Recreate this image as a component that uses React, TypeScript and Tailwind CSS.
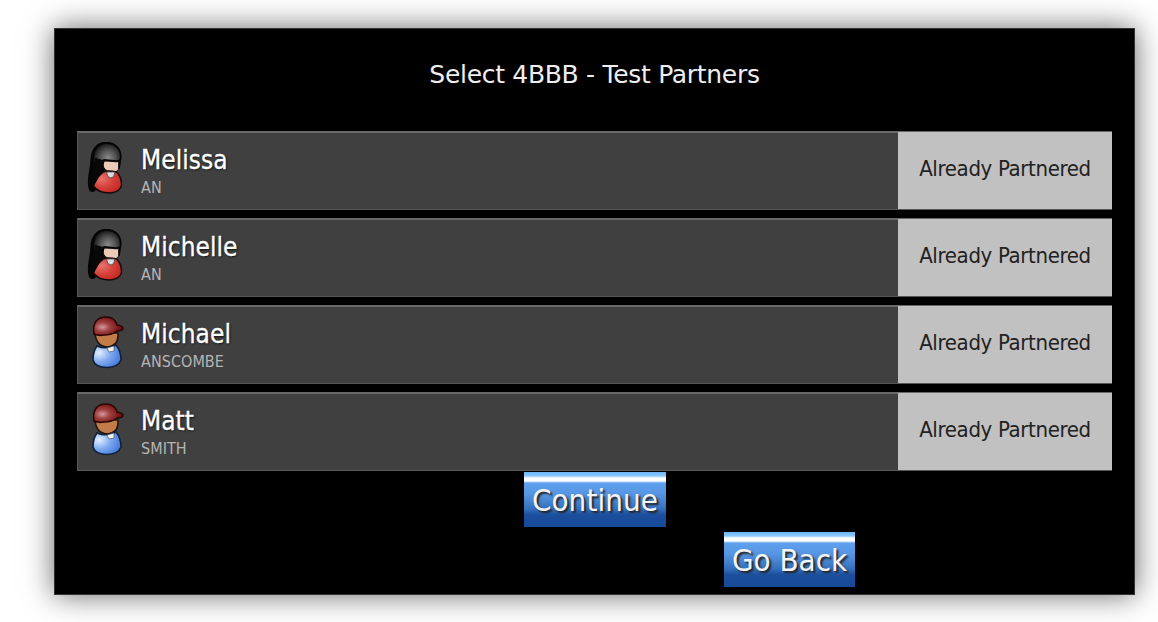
const players = [
    { name: 'Melissa', surname: 'AN', female: true },
    { name: 'Michelle', surname: 'AN', female: true },
    { name: 'Michael', surname: 'ANSCOMBE', female: false },
    { name: 'Matt', surname: 'SMITH', female: false },
]

const FemaleIcon = () => (
    <svg width="37" height="54" viewBox="0.5 0 38 54" preserveAspectRatio="none">
        <defs>
            <radialGradient id="hair" gradientUnits="userSpaceOnUse" cx="22" cy="17" r="17">
                <stop offset="0" stopColor="#8a8a8a" />
                <stop offset="0.45" stopColor="#555" />
                <stop offset="0.85" stopColor="#1c1c1c" />
                <stop offset="1" stopColor="#050505" />
            </radialGradient>
            <radialGradient id="dress" cx="0.3" cy="0.35" r="0.8">
                <stop offset="0" stopColor="#e8746d" />
                <stop offset="0.5" stopColor="#d5403b" />
                <stop offset="1" stopColor="#c3241f" />
            </radialGradient>
        </defs>
        <path d="M20 1C10 1 4.500 8 4 19C3.500 29 0 38 2 47C2.500 51 6 52 9 50L18 30L34 28C38 13 33 1 20 1Z" fill="#060606" />
        <path d="M17 20H33V28Q31 32 25 31Q18 30 17 24Z" fill="#eacbb7" stroke="#111" strokeWidth="1" />
        <path d="M17 31Q22 29 31 31Q36 36 36 44Q35 51 24 52Q12 52 7 45Q9 37 17 31Z" fill="url(#dress)" stroke="#16090a" strokeWidth="1.600" />
        <path d="M20.500 31L22 35.500L25 37L28 35.500L29 31Z" fill="#ddd" stroke="#444" strokeWidth="0.800" />
        <path d="M7 18C7 8 12 2 20 2C31 2 36 9 35 18Q34 21 28 20L18 19L15 29L6 44Q3 38 6 28Z" fill="url(#hair)" stroke="#050505" strokeWidth="1.800" />
        <path d="M9 17Q13 18 17 19L16 30L7 46L3 46L7 26Z" fill="#080808" />
    </svg>
)

const MaleIcon = () => (
    <svg width="37" height="54" viewBox="0 0 37 54">
        <defs>
            <radialGradient id="cap" cx="0.3" cy="0.55" r="0.65">
                <stop offset="0" stopColor="#d49a9a" />
                <stop offset="0.4" stopColor="#9e4040" />
                <stop offset="1" stopColor="#6e0909" />
            </radialGradient>
            <radialGradient id="shirt" cx="0.22" cy="0.35" r="0.75">
                <stop offset="0" stopColor="#e3efff" />
                <stop offset="0.55" stopColor="#7faaf0" />
                <stop offset="1" stopColor="#4c80dc" />
            </radialGradient>
        </defs>
        <path d="M8 18H31Q32 31 20 32Q9 31 8 18Z" fill="#c27c4a" stroke="#201510" strokeWidth="1.600" />
        <path d="M10 31Q19 35 29 30Q34 36 34 45Q31 52.500 20 52.500Q8 52.500 6 45Q6 36 10 31Z" fill="url(#shirt)" stroke="#12203c" strokeWidth="1.600" />
        <path d="M20 33L27 31L27 36L22 37Z" fill="#f2f2ec" stroke="#444" strokeWidth="0.600" />
        <path d="M7 19C5 7 11 2 19 2C26 2 29 6 30 10Q35 10.500 36 13Q36 16 30 16Q25 20 17 20Q11 21 7 19Z" fill="url(#cap)" stroke="#2a0505" strokeWidth="1.600" />
    </svg>
)

const App = () => {
    return (
        <div className="h-[622px] w-[1158px] overflow-hidden bg-white pl-[54px] pt-7 font-['DejaVu_Sans_Condensed','DejaVu_Sans',sans-serif] [font-stretch:condensed]">
            <main className="flex h-[567px] w-[1081px] flex-col border border-[#333] bg-black px-[22px] shadow-[0_0_28px_rgba(0,0,0,0.6)]">
                <h1 className="h-[102px] pt-[28px] text-center font-['DejaVu_Sans',sans-serif] text-[25px] leading-9 text-[#eee] [font-stretch:normal]">
                    <span className="inline-block tracking-[-0.3px]">Select 4BBB - Test Partners</span>
                </h1>

                <ul className="flex flex-col gap-[8px]">
                    {players.map((player) => (
                        <li key={player.name} className="flex h-[79px] border border-t-2 border-[#575757] border-t-[#696969] border-r-0 bg-[#404040]">
                            <div className="flex flex-1 pl-[9px] pt-[8px]">
                                {player.female ? <FemaleIcon /> : <MaleIcon />}
                                <div className="ml-[17px] flex flex-col pt-px">
                                    <span className="self-start text-[26px] leading-[36px] tracking-[0.05px] text-white [-webkit-text-stroke:0.3px_white] [text-shadow:1px_1px_2px_#111]">{player.name}</span>
                                    <span className="self-start text-[16px] leading-[20px] tracking-[0.05px] text-[#b5b5b5]">{player.surname}</span>
                                </div>
                            </div>
                            <div className="-mt-px flex w-[214px] items-center justify-center bg-[#c1c1c1] pb-1 text-[22px] tracking-[-0.35px] text-[#222]">
                                <span>Already Partnered</span>
                            </div>
                        </li>
                    ))}
                </ul>

                <div className="flex flex-col gap-[5px] pt-px">
                    <button className="ml-[447px] h-[55px] w-[142px] bg-[linear-gradient(#6cb5f5_0,#8bcaff_4px,#fff_6px,#fff_9px,#5ea1ee_11px,#5795e2_22px,#336fbd_37px,#1b4e9c_43px,#164b99_100%)] pt-px text-[31px] tracking-[0.1px] text-[#f4f4f4] [text-shadow:2px_2px_2px_#222]">
                        <span>Continue</span>
                    </button>
                    <button className="ml-[647px] h-[55px] w-[131px] bg-[linear-gradient(#6cb5f5_0,#8bcaff_4px,#fff_6px,#fff_9px,#5ea1ee_11px,#5795e2_22px,#336fbd_37px,#1b4e9c_43px,#164b99_100%)] pt-0.5 text-[31px] text-[#f4f4f4] [text-shadow:2px_2px_2px_#222]">
                        <span>Go Back</span>
                    </button>
                </div>
            </main>
        </div>
    )
}

export default App
